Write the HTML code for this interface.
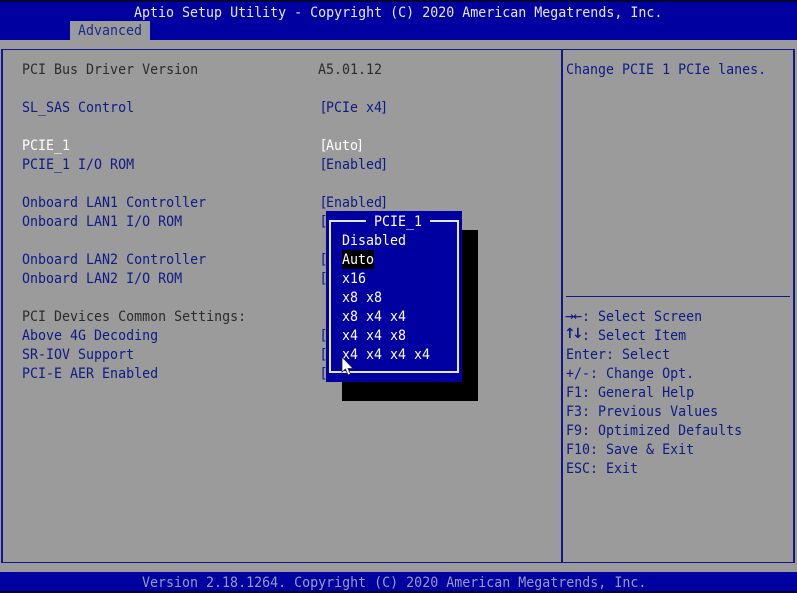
<!DOCTYPE html>
<html><head><meta charset="utf-8">
<style>
html,body{margin:0;padding:0;width:797px;height:593px;overflow:hidden;background:#9b9b9b}
#r{position:relative;width:797px;height:593px;overflow:hidden;font-family:"DejaVu Sans Mono","Liberation Mono",monospace;font-size:13.3px;line-height:19px;color:#101a85}
.a{position:absolute}
.t{position:absolute;white-space:pre;height:19px;line-height:19px;margin-top:1px;transform:scaleY(1.09);transform-origin:0 13px}
.w{color:#fff}
.k{color:#2b2b2b}
.o{position:relative;left:1.5px}
.c{position:relative;left:-2px}
.h{position:absolute;white-space:pre;height:19px;line-height:19px;font-family:"DejaVu Sans",sans-serif;font-weight:bold;font-size:11px;color:#101a85}
.v{position:absolute;white-space:pre;height:19px;line-height:19px;font-family:"DejaVu Sans",sans-serif;font-weight:bold;font-size:14px;color:#101a85}
</style></head><body><div id="r">
<div class="a" style="left:0;top:0;width:797px;height:40px;background:#0000a0"></div>
<div class="a" style="left:0;top:0;width:797px;height:2px;background:#050530"></div>
<div class="t" style="left:134px;top:3px;color:#e8e8f4">Aptio Setup Utility - Copyright (C) 2020 American Megatrends, Inc.</div>
<div class="a" style="left:70px;top:21px;width:80px;height:19px;background:#9b9b9b"></div>
<div class="t" style="left:78px;top:21px;color:#1a2a90">Advanced</div>

<div class="a" style="left:1px;top:49px;width:790px;height:512px;border:2px solid #14148c;border-width:1px 2px 1px 2px"></div>
<div class="a" style="left:561px;top:49px;width:2px;height:514px;background:#14148c"></div>
<div class="a" style="left:566px;top:296px;width:224px;height:1px;background:#14148c"></div>

<div class="t k" style="left:22px;top:60px">PCI Bus Driver Version</div>
<div class="t k" style="left:318px;top:60px">A5.01.12</div>
<div class="t" style="left:22px;top:98px">SL_SAS Control</div>
<div class="t" style="left:318px;top:98px"><span class="o">[</span>PCIe x4<span class="c">]</span></div>
<div class="t w" style="left:22px;top:136px">PCIE_1</div>
<div class="t w" style="left:318px;top:136px"><span class="o">[</span>Auto<span class="c">]</span></div>
<div class="t" style="left:22px;top:155px">PCIE_1 I/O ROM</div>
<div class="t" style="left:318px;top:155px"><span class="o">[</span>Enabled<span class="c">]</span></div>
<div class="t" style="left:22px;top:193px">Onboard LAN1 Controller</div>
<div class="t" style="left:318px;top:193px"><span class="o">[</span>Enabled<span class="c">]</span></div>
<div class="t" style="left:22px;top:212px">Onboard LAN1 I/O ROM</div>
<div class="t" style="left:318px;top:212px"><span class="o">[</span></div>
<div class="t" style="left:22px;top:250px">Onboard LAN2 Controller</div>
<div class="t" style="left:318px;top:250px"><span class="o">[</span></div>
<div class="t" style="left:22px;top:269px">Onboard LAN2 I/O ROM</div>
<div class="t" style="left:318px;top:269px"><span class="o">[</span></div>
<div class="t k" style="left:22px;top:307px">PCI Devices Common Settings:</div>
<div class="t" style="left:22px;top:326px">Above 4G Decoding</div>
<div class="t" style="left:318px;top:326px"><span class="o">[</span></div>
<div class="t" style="left:22px;top:345px">SR-IOV Support</div>
<div class="t" style="left:318px;top:345px"><span class="o">[</span></div>
<div class="t" style="left:22px;top:364px">PCI-E AER Enabled</div>
<div class="t" style="left:318px;top:364px"><span class="o">[</span></div>

<div class="t" style="left:566px;top:60px">Change PCIE 1 PCIe lanes.</div>
<div class="h" style="left:565px;top:307px">→</div>
<div class="h" style="left:573px;top:307px">←</div>
<div class="t" style="left:566px;top:307px">  : Select Screen</div>
<div class="v" style="left:564px;top:325px">↑</div>
<div class="v" style="left:572px;top:325px">↓</div>
<div class="t" style="left:566px;top:326px">  : Select Item</div>
<div class="t" style="left:566px;top:345px">Enter: Select</div>
<div class="t" style="left:566px;top:364px">+/-: Change Opt.</div>
<div class="t" style="left:566px;top:383px">F1: General Help</div>
<div class="t" style="left:566px;top:402px">F3: Previous Values</div>
<div class="t" style="left:566px;top:421px">F9: Optimized Defaults</div>
<div class="t" style="left:566px;top:440px">F10: Save &amp; Exit</div>
<div class="t" style="left:566px;top:459px">ESC: Exit</div>

<div class="a" style="left:342px;top:230px;width:136px;height:171px;background:#000"></div>
<div class="a" style="left:326px;top:211px;width:136px;height:171px;background:#0000a0"></div>
<div class="a" style="left:329px;top:220px;width:126px;height:149px;border:2px solid #e4e4f4"></div>
<div class="a" style="left:366px;top:214px;width:64px;height:14px;background:#0000a0"></div>
<div class="t w" style="left:374px;top:212px">PCIE_1</div>
<div class="t w" style="left:342px;top:231px">Disabled</div>
<div class="a" style="left:342px;top:250px;width:32px;height:19px;background:#000"></div>
<div class="t w" style="left:342px;top:250px">Auto</div>
<div class="t w" style="left:342px;top:269px">x16</div>
<div class="t w" style="left:342px;top:288px">x8 x8</div>
<div class="t w" style="left:342px;top:307px">x8 x4 x4</div>
<div class="t w" style="left:342px;top:326px">x4 x4 x8</div>
<div class="t w" style="left:342px;top:345px">x4 x4 x4 x4</div>
<svg class="a" style="left:340px;top:356px" width="16" height="22" viewBox="0 0 16 22"><path d="M2 1V16L5.5 13L8 19L10.5 18L8 12.500H13Z" fill="#fff" stroke="#222" stroke-width=".8"/></svg>

<div class="a" style="left:0;top:572px;width:797px;height:21px;background:#0000a0"></div>
<div class="a" style="left:0;top:591px;width:797px;height:2px;background:#050530"></div>
<div class="t" style="left:142px;top:573px;color:#9a9ac8">Version 2.18.1264. Copyright (C) 2020 American Megatrends, Inc.</div>
</div></body></html>
